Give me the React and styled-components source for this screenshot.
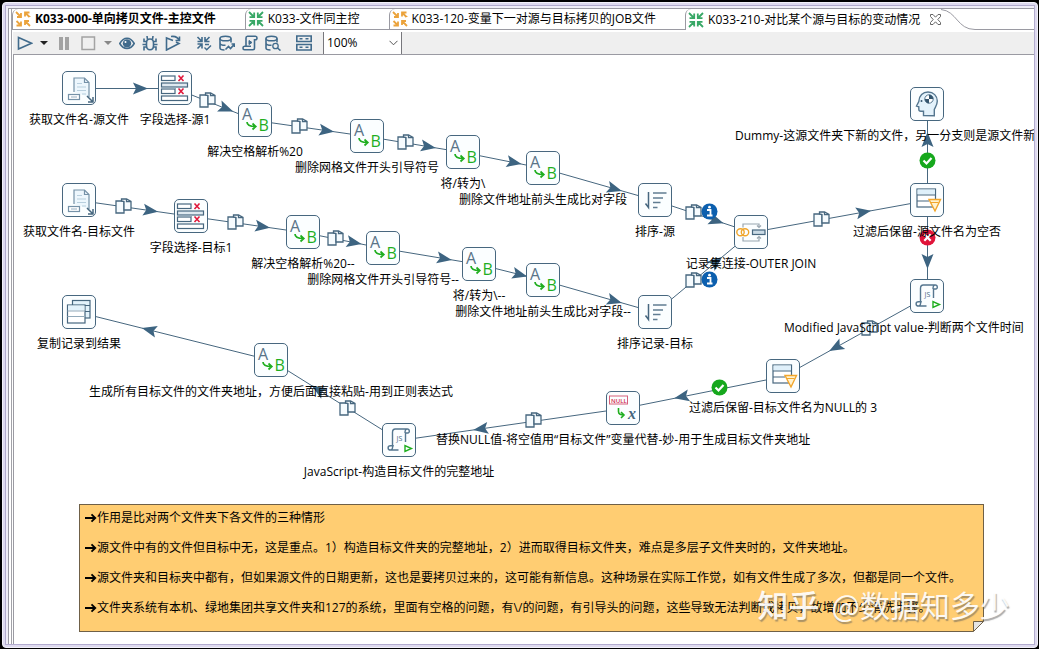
import React, { Fragment } from 'react'
import styled, { createGlobalStyle } from 'styled-components'

const SLATE = '#47677f'
const GREEN = '#1fae1f'

const GlobalStyle = createGlobalStyle`
  * {
    box-sizing: border-box;
  }

  body {
    margin: 0;
    background-color: #000;
    color: #000;
    font: 12px/16px "Open Sans", "Noto Sans CJK SC", sans-serif;
  }
`

const Desktop = styled.div`
  display: flex;
  min-height: 100vh;
  padding: 2px 1px 1px 2px;
`

const Window = styled.div`
  flex: 1;
  min-width: 0;
  display: flex;
  padding: 2px;
  border: 1px solid #f3f1fa;
  border-radius: 4px;
  background-color: #dedaef;
`

const Frame = styled.div`
  flex: 1;
  min-width: 0;
  display: flex;
  padding: 2px 0 0 2px;
  border: 1px solid #b3accf;
  background-color: #f0eef8;
`

const Editor = styled.div`
  flex: 1;
  min-width: 0;
  display: flex;
  padding-left: 2px;
  border: solid #9a9aa2;
  border-width: 1px 0 0 1px;
  background-color: #fff;
`

const Pane = styled.main`
  flex: 1;
  min-width: 0;
  display: flex;
  flex-direction: column;
  border-left: 1px solid #a2a2a8;
`

const TabStrip = styled.div`
  display: flex;
  height: 21px;
  margin-bottom: 2px;
`

const Tab = styled.button`
  display: flex;
  align-items: center;
  gap: 4px;
  flex: none;
  padding: 0 ${(props) => (props.$active ? 0 : 29)}px 0 2px;
  border: solid #9a9aa2;
  border-width: 0 0 ${(props) => (props.$active ? 0 : 1)}px 1px;
  border-top-left-radius: 6px;
  background-color: #fff;
  color: #000;
  font: inherit;
  font-weight: ${(props) => (props.$bold ? 700 : 400)};
  white-space: nowrap;
`

const TabClose = styled.svg`
  margin-left: 6px;
`

const TabCurve = styled.svg`
  flex: none;
`

const TabFill = styled.div`
  flex: 1;
  border-bottom: 1px solid #9a9aa2;
`

const Toolbar = styled.div`
  display: flex;
  align-items: center;
  gap: 8px;
  height: 22px;
  margin-left: 1px;
  padding-left: 1px;
  background-color: #efefef;
`

const ToolGroup = styled.div`
  display: flex;
`

const ToolButton = styled.button`
  display: flex;
  align-items: center;
  justify-content: center;
  width: ${(props) => props.$width || 23}px;
  height: 22px;
  padding: 0;
  border: 0;
  background: none;
`

const Zoom = styled.label`
  position: relative;
  display: block;
`

const ZoomSelect = styled.select`
  appearance: none;
  display: block;
  width: 79px;
  height: 22px;
  padding: 0 20px 0 3px;
  border: solid #77777c;
  border-width: 0 1px;
  border-radius: 0;
  background-color: #fff;
  color: #000;
  font: inherit;
`

const ZoomArrow = styled.svg`
  position: absolute;
  right: 4px;
  top: 8px;
  pointer-events: none;
`

const Canvas = styled.section`
  position: relative;
  flex: 1;
  min-height: 580px;
  margin-left: 1px;
  padding: 1px 0 0 1px;
  border: solid #9a9aa2;
  border-width: 1px 0 0 1px;
  overflow: hidden;
`

const Sheet = styled.div`
  position: relative;
  height: 100%;
`

const Hops = styled.svg`
  position: absolute;
  left: 0;
  top: 0;
  width: 100%;
  height: 580px;
`

const Node = styled.div`
  position: absolute;
  left: ${(props) => props.$x}px;
  top: ${(props) => props.$y - 17}px;
  display: flex;
  flex-direction: column;
  align-items: center;
  width: 0;
`

const NodeBox = styled.div`
  flex: none;
  width: 34px;
  height: 34px;
  border: 1px solid ${SLATE};
  border-radius: 5px;
  background-color: #fbfeff;
`

const NodeLabel = styled.div`
  flex: none;
  width: ${(props) => (props.$width ? `${props.$width}px` : 'max-content')};
  margin-top: 7px;
  white-space: nowrap;
`

const Note = styled.div`
  position: absolute;
  left: 64px;
  top: 448px;
  width: 905px;
  height: 128px;
  padding: 5px;
  border: 1px solid #6f6047;
  background-color: #ffcd72;
`

const NoteLine = styled.p`
  display: flex;
  margin: 0 0 14px;
  white-space: nowrap;
`

const NoteArrow = styled.svg`
  flex: none;
  margin-top: 2px;
`

const NoteFold = styled.svg`
  position: absolute;
  right: -1px;
  bottom: -1px;
`

const Watermark = styled.div`
  position: absolute;
  right: 24px;
  bottom: 20px;
  display: flex;
  gap: 12px;
  color: rgba(255, 255, 255, 0.92);
  font: 400 30px/40px "Noto Sans CJK SC", sans-serif;
  text-shadow: 1px 2px 1px rgba(90, 90, 90, 0.5);
  white-space: nowrap;

  b {
    font-size: 31px;
    font-weight: 500;
  }
`

/* ---- step icons, all on a 32px grid ---- */

const StepSvg = ({ children }) => (
  <svg width="32" height="32" viewBox="0 0 32 32" fill="none" stroke={SLATE} strokeWidth="1.2">
    {children}
  </svg>
)

const FilesIcon = () => (
  <StepSvg>
    <path d="M11 20V6h10.500l4.500 4.500V25" fill="#edf7fd" stroke="#7592a8" />
    <path d="M21.500 6v4.500H26" stroke="#7592a8" />
    <path d="M14 11.500h5M14 15h9M14 18.500h9M19 22h4" stroke="#b8cfde" />
    <rect x="5.500" y="22.500" width="11" height="5" fill="#fff" stroke="#7592a8" />
    <path d="M8 25h6" stroke="#a9bdcb" />
    <path d="M24 24l5.500 5.500M30 25v5h-5" strokeWidth="1.500" />
  </StepSvg>
)

const SelectIcon = () => (
  <StepSvg>
    <rect x="2.500" y="4" width="13.500" height="4.500" fill="#fff" />
    <rect x="2.500" y="17" width="13.500" height="4.500" fill="#fff" />
    <rect x="2.500" y="11" width="26" height="4" fill="#dfe9f0" />
    <path d="M3 16h14" strokeWidth="2" stroke="#8fa5b5" />
    <rect x="2.500" y="24" width="26" height="4.500" fill="#fff" />
    <path d="M19.500 3.500l5 5.500M24.500 3.500l-5 5.500M19.500 16.500l5 5.500M24.500 16.500l-5 5.500" stroke="#e0193c" strokeWidth="1.600" />
  </StepSvg>
)

const ReplaceIcon = () => (
  <StepSvg>
    <text x="3" y="16" fontSize="16" fill="#5a7488" stroke="none">A</text>
    <text x="19.500" y="27" fontSize="16" fill={GREEN} stroke="none">B</text>
    <path d="M8 18c0 3.500 3 4.500 8.500 4.500M13.500 19.500l3.300 3-3.300 3" stroke={GREEN} strokeWidth="1.700" />
  </StepSvg>
)

const SortIcon = () => (
  <StepSvg>
    <path d="M9.500 8v15.500L6.500 19.500" strokeWidth="1.500" />
    <path d="M14 9h13.500M14 14h10M14 18.500h7.500M14 23.500h4.500" stroke="#617d92" strokeWidth="1.400" />
  </StepSvg>
)

const JoinIcon = () => (
  <StepSvg>
    <path d="M8 11.500V8h16v3M8 21v4h16v-4" stroke="#98a5af" />
    <path d="M22 9.500l2 2 2-2M22 22.500l2-2 2 2" stroke="#98a5af" />
    <ellipse cx="5.500" cy="16.300" rx="3.700" ry="3.500" stroke="#f0a52a" strokeWidth="1.400" />
    <ellipse cx="10" cy="16.300" rx="3.700" ry="3.500" stroke="#f0a52a" strokeWidth="1.400" />
    <rect x="17.500" y="14" width="12.500" height="4.500" fill="#c9dae5" />
  </StepSvg>
)

const FilterIcon = () => (
  <StepSvg>
    <rect x="6" y="5" width="18.500" height="18" fill="#fff" />
    <path d="M6.500 5.500h17.500v5H6.500z" fill="#dff0fa" stroke="none" />
    <path d="M6 11h18.500M6 17h12" />
    <path d="M18 15.500h11.500L24 27z" fill="#fff2cf" stroke="#f2a62c" strokeWidth="1.400" />
    <path d="M20 18.500h7.500" stroke="#f2a62c" strokeWidth="1" />
  </StepSvg>
)

const ScriptIcon = () => (
  <StepSvg>
    <path
      d="M9.500 21.500V8.500c0-2 .8-3.500 2.800-3.500h12c2.500 0 2.700 4 .4 4h-2.200v9M24 5c-1.500 0-2 1.500-2 4M15.500 26H7.500c-3.200 0-3.200-4.200 0-4.200h3.300M7.500 26c2 0 2.200-1.800 2.200-4.200"
      stroke="#54768f"
      strokeWidth="1.400"
    />
    <text x="13.500" y="16.500" fontSize="7" fill="#47677f" stroke="none">JS</text>
    <path d="M22 21.500v6l6.500-3z" stroke={GREEN} strokeWidth="1.400" />
  </StepSvg>
)

const HeadIcon = () => (
  <StepSvg>
    <path
      d="M12.500 27.500v-4.200H9.800c-1.500 0-2-.7-2-2v-2.500L5.500 18l2.300-4.500C8 7.500 12 4 17 4c5.500 0 9.300 4 9.300 9 0 4-2.300 6.500-3 8.500v6.200z"
      fill="#e3f2fb"
      stroke="#54768f"
      strokeWidth="1.400"
    />
    <circle cx="18" cy="11" r="4.200" fill="#fff" stroke="#54768f" strokeWidth="1" />
    <path d="M18 11V6.800a4.200 4.200 0 0 1 4.200 4.200zM18 11v4.200a4.200 4.200 0 0 1-4.200-4.200z" fill="#35566e" stroke="none" />
    <circle cx="10.500" cy="13" r="1" fill="#35566e" stroke="none" />
  </StepSvg>
)

const NullIcon = () => (
  <StepSvg>
    <rect x="2.500" y="4" width="18" height="8" stroke="#d6607a" strokeWidth="1" />
    <text x="4" y="10.500" fontSize="6" fontWeight="600" fill="#d0254b" stroke="none">NULL</text>
    <path d="M11.500 16v3.500c0 2.500 1.500 3.500 5.500 3.500M14 20l3 3-3 3" stroke={GREEN} strokeWidth="1.600" />
    <text x="21" y="27" fontSize="16" fontStyle="italic" fontWeight="700" fontFamily="Liberation Serif, serif" fill="#47677f" stroke="none">x</text>
  </StepSvg>
)

const RowsIcon = () => (
  <StepSvg>
    <rect x="9.500" y="4.500" width="17.500" height="17.500" fill="#e3f2fb" />
    <path d="M9.500 9.500H27M9.500 15.500H27" />
    <rect x="4.500" y="9" width="17.500" height="18" fill="#fff" />
    <path d="M5 9.500h16.500v5H5z" fill="#e3f2fb" stroke="none" />
    <path d="M4.500 15h17.500M4.500 20.500h17.500" stroke="#93aaba" />
  </StepSvg>
)

const ICONS = {
  files: FilesIcon,
  select: SelectIcon,
  replace: ReplaceIcon,
  sort: SortIcon,
  join: JoinIcon,
  filter: FilterIcon,
  script: ScriptIcon,
  head: HeadIcon,
  nul: NullIcon,
  rows: RowsIcon,
}

/* positions are on the 16px canvas grid */
const STEPS = {
  srcFiles: { x: 64, y: 32, icon: 'files', label: '获取文件名-源文件' },
  srcSelect: { x: 160, y: 32, icon: 'select', label: '字段选择-源1' },
  srcSpace: { x: 240, y: 64, icon: 'replace', label: '解决空格解析%20' },
  srcPrefix: { x: 352, y: 80, icon: 'replace', label: '删除网格文件开头引导符号' },
  srcSlash: { x: 448, y: 96, icon: 'replace', label: '将/转为\\' },
  srcField: { x: 528, y: 112, icon: 'replace', label: '删除文件地址前头生成比对字段' },
  srcSort: { x: 640, y: 144, icon: 'sort', label: '排序-源' },
  dstFiles: { x: 64, y: 144, icon: 'files', label: '获取文件名-目标文件' },
  dstSelect: { x: 176, y: 160, icon: 'select', label: '字段选择-目标1' },
  dstSpace: { x: 288, y: 176, icon: 'replace', label: '解决空格解析%20--' },
  dstPrefix: { x: 368, y: 192, icon: 'replace', label: '删除网格文件开头引导符号--' },
  dstSlash: { x: 464, y: 208, icon: 'replace', label: '将/转为\\--' },
  dstField: { x: 528, y: 224, icon: 'replace', label: '删除文件地址前头生成比对字段--' },
  dstSort: { x: 640, y: 256, icon: 'sort', label: '排序记录-目标' },
  join: { x: 736, y: 176, icon: 'join', label: '记录集连接-OUTER JOIN' },
  filterSrc: { x: 912, y: 144, icon: 'filter', label: '过滤后保留-源文件名为空否' },
  dummy: { x: 912, y: 48, icon: 'head', label: 'Dummy-这源文件夹下新的文件，另一分支则是源文件新', labelWidth: 384 },
  compare: { x: 912, y: 240, icon: 'script', label: 'Modified JavaScript value-判断两个文件时间', labelWidth: 286 },
  filterNull: { x: 768, y: 320, icon: 'filter', label: '过滤后保留-目标文件名为NULL的 3' },
  ifNull: { x: 608, y: 352, icon: 'nul', label: '替换NULL值-将空值用“目标文件”变量代替-妙-用于生成目标文件夹地址' },
  fullPath: { x: 384, y: 384, icon: 'script', label: 'JavaScript-构造目标文件的完整地址' },
  folders: { x: 256, y: 304, icon: 'replace', label: '生成所有目标文件的文件夹地址，方便后面直接粘贴-用到正则表达式' },
  result: { x: 64, y: 256, icon: 'rows', label: '复制记录到结果' },
}

const HOPS = [
  ['srcFiles', 'srcSelect'],
  ['srcSelect', 'srcSpace', 'copy'],
  ['srcSpace', 'srcPrefix', 'copy'],
  ['srcPrefix', 'srcSlash', 'copy'],
  ['srcSlash', 'srcField'],
  ['srcField', 'srcSort'],
  ['srcSort', 'join', 'copy', 'info'],
  ['dstFiles', 'dstSelect', 'copy'],
  ['dstSelect', 'dstSpace', 'copy'],
  ['dstSpace', 'dstPrefix', 'copy'],
  ['dstPrefix', 'dstSlash'],
  ['dstSlash', 'dstField'],
  ['dstField', 'dstSort'],
  ['dstSort', 'join', 'copy', 'info'],
  ['join', 'filterSrc', 'copy'],
  ['filterSrc', 'dummy', 'yes'],
  ['filterSrc', 'compare', 'no'],
  ['compare', 'filterNull', 'copy'],
  ['filterNull', 'ifNull', 'yes'],
  ['ifNull', 'fullPath', 'copy'],
  ['fullPath', 'folders', 'copy'],
  ['folders', 'result'],
]

const Badge = ({ kind, x, y }) => (
  <g transform={`translate(${x} ${y})`}>
    {kind === 'copy' && (
      <g fill="#f6fbfe" stroke={SLATE} strokeWidth="1.300">
        <path d="M-7.500-4.500h8v12h-8z" />
        <path d="M-2-4.500v-2h5L7.500-4v8.500h-7v-8.500z" />
        <path d="M3-6.500v2.700h4.500" fill="none" />
      </g>
    )}
    {kind === 'info' && (
      <g>
        <circle r="8" fill="#0c5fae" />
        <path d="M-2.500-1.500H1v5M-2.500 4h5.500" stroke="#fff" strokeWidth="1.800" fill="none" />
        <circle cx="0" cy="-4.300" r="1.400" fill="#fff" />
      </g>
    )}
    {kind === 'yes' && (
      <g>
        <circle r="8" fill="#16a81d" />
        <path d="M-4 0l3 3 5-5.500" stroke="#fff" strokeWidth="2.200" fill="none" />
      </g>
    )}
    {kind === 'no' && (
      <g>
        <circle r="8" fill="#e0143a" />
        <path d="M-3.200-3.200l6.400 6.400M3.200-3.200l-6.400 6.400" stroke="#fff" strokeWidth="2.200" />
      </g>
    )}
  </g>
)

const Hop = ({ from, to, badge, extra }) => {
  const a = STEPS[from]
  const b = STEPS[to]
  const dx = b.x - a.x
  const dy = b.y - a.y
  const t = 0.64 + 7 / Math.hypot(dx, dy)
  const angle = (Math.atan2(dy, dx) * 180) / Math.PI
  const bx = Math.floor(a.x + dx * 0.4)
  const by = Math.floor(a.y + dy * 0.4) - 1

  return (
    <Fragment>
      <line x1={a.x} y1={a.y} x2={b.x} y2={b.y} stroke={SLATE} />
      <path
        d="M0 0L-15 6L-12 0L-15-6Z"
        fill="#3d6481"
        transform={`translate(${a.x + dx * t} ${a.y + dy * t}) rotate(${angle})`}
      />
      {badge && <Badge kind={badge} x={bx} y={by} />}
      {extra && <Badge kind={extra} x={bx + 16} y={by} />}
    </Fragment>
  )
}

const Step = ({ x, y, icon, label, labelWidth }) => {
  const Icon = ICONS[icon]
  return (
    <Node $x={x} $y={y}>
      <NodeBox>
        <Icon />
      </NodeBox>
      <NodeLabel $width={labelWidth}>{label}</NodeLabel>
    </Node>
  )
}

/* ---- tabs ---- */

const JobIcon = () => (
  <svg width="16" height="16" viewBox="0 0 16 16" fill="none" stroke="#eba33c" strokeWidth="1.800">
    <path d="M1 1l4.500 4.500M6 2v4H2M15 5.500V6M14.500 6L10 1.500M10 5.500v-4h4.500M1.500 10L6 14.500M6 10.500v4H1.500M15 15l-4.500-4.500M10 14v-4h4" />
  </svg>
)

const TransIcon = () => (
  <svg width="16" height="16" viewBox="0 0 16 16" fill="none" stroke="#38a866" strokeWidth="1.800">
    <path d="M1 1l5 5M6.200 1.500v4.700H1.500M15 1l-5 5M9.800 1.500v4.700h4.700M1 15l5-5M6.200 14.500V9.800H1.500M15 15l-5-5M9.800 14.500V9.800h4.700" />
  </svg>
)

const TABS = [
  { title: 'K033-000-单向拷贝文件-主控文件', icon: JobIcon, bold: true },
  { title: 'K033-文件同主控', icon: TransIcon },
  { title: 'K033-120-变量下一对源与目标拷贝的JOB文件', icon: JobIcon },
  { title: 'K033-210-对比某个源与目标的变动情况', icon: TransIcon, active: true },
]

/* ---- toolbar ---- */

const ToolSvg = ({ size = 16, color = '#416b8c', children }) => (
  <svg width={size} height="16" viewBox={`0 0 ${size} 16`} fill="none" stroke={color} strokeWidth="1.600">
    {children}
  </svg>
)

const Caret = ({ color }) => (
  <ToolSvg size={8}>
    <path d="M0 6h8l-4 4z" fill={color} stroke="none" />
  </ToolSvg>
)

const Database = () => (
  <Fragment>
    <ellipse cx="6.500" cy="3.500" rx="5.500" ry="2.300" />
    <path d="M1 3.500v9.500c0 1 2 2 4.500 2M12 3.500v4M1 8c0 1.500 2.500 2.300 5.500 2.300" />
  </Fragment>
)

const RUN_TOOLS = [
  { name: 'Run', width: 22, art: <ToolSvg><path d="M1.500 2.500v11.500l13-5.700z" /></ToolSvg> },
  { name: 'Run options', width: 16, art: <Caret color="#222" /> },
  { name: 'Pause', width: 24, art: <ToolSvg color="#a3a3a3"><path d="M5 2v13M11 2v13" strokeWidth="4" /></ToolSvg> },
  { name: 'Stop', width: 24, art: <ToolSvg color="#a3a3a3"><path d="M2 2h12.500v12.500H2z" strokeWidth="1.500" /></ToolSvg> },
  { name: 'Stop options', width: 15, art: <Caret color="#888" /> },
  {
    name: 'Preview',
    art: (
      <ToolSvg>
        <path d="M.8 8.500C3 4.500 5.500 3.300 8 3.300s5 1.200 7.200 5.200c-2.200 4-4.700 5-7.200 5s-5-1-7.200-5z" />
        <circle cx="8" cy="8.400" r="4.200" fill="#416b8c" stroke="none" />
        <circle cx="6.500" cy="7" r="1" fill="#fff" stroke="none" />
      </ToolSvg>
    ),
  },
  {
    name: 'Debug',
    art: (
      <ToolSvg>
        <path d="M4.500 8c0-3 1.500-4 3.500-4s3.500 1 3.500 4v2.500c0 3-1.500 4.300-3.500 4.300s-3.500-1.300-3.500-4.300z" />
        <path d="M5.500 4.500L5 1M10.500 4.500L11 1M4.500 6.500H2V3.500M11.500 6.500H14V3.500M.5 9.500h4M11.500 9.500h4M4.500 12H2v3.500M11.500 12H14v3.500" />
      </ToolSvg>
    ),
  },
  {
    name: 'Replay',
    art: (
      <ToolSvg>
        <path d="M8 5.500L1.500 3v12l12.500-6.500-3-1.500" />
        <path d="M6 1.500c4.500-.5 7 .5 8 4M10.500 5.500H14.500V1.500" />
      </ToolSvg>
    ),
  },
]

const CHECK_TOOLS = [
  {
    name: 'Verify',
    art: (
      <ToolSvg>
        <path d="M1.500 2l4 4M6 2v4.500H1.500M13.500 2l-4 4M9 2v4.500h4.500M1.500 13.500l4-4M6 13.500V9H1.500M9 9.500h4" />
        <path d="M8.500 12.500l2.200 2.200L15 10.500" strokeWidth="1.400" />
      </ToolSvg>
    ),
  },
  {
    name: 'Impact analysis',
    art: <ToolSvg><Database /><path d="M6.500 14.500l3-3 2 2 4-4.500M12.500 9H15.500v3" /></ToolSvg>,
  },
  {
    name: 'Generate SQL',
    art: (
      <ToolSvg>
        <path d="M4 11V3c0-1 .5-1.700 1.500-1.700h8c2 0 2 3.500 0 3.500h-1V13c0 1-.5 1.700-1.500 1.700H2.500c-2 0-2-3.500 0-3.500H9" />
        <path d="M7 5.500v4l3-2z" fill="#416b8c" strokeWidth="1" />
      </ToolSvg>
    ),
  },
  {
    name: 'Explore database',
    art: <ToolSvg><Database /><circle cx="10.500" cy="11" r="2.700" strokeWidth="1.300" /><path d="M12.500 13l3 2.500" /></ToolSvg>,
  },
]

const RESULT_TOOLS = [
  {
    name: 'Show results',
    art: (
      <ToolSvg>
        <path d="M.8 1h14.400v5.500H.8zM.8 9.500h14.400V15H.8zM3.500 3.800h3M9.500 3.800h3M3.500 12.300h3M9.500 12.300h3" />
      </ToolSvg>
    ),
  },
]

const NOTE = [
  '作用是比对两个文件夹下各文件的三种情形',
  '源文件中有的文件但目标中无，这是重点。1）构造目标文件夹的完整地址，2）进而取得目标文件夹，难点是多层子文件夹时的，文件夹地址。',
  '源文件夹和目标夹中都有，但如果源文件的日期更新，这也是要拷贝过来的，这可能有新信息。这种场景在实际工作觉，如有文件生成了多次，但都是同一个文件。',
  '文件夹系统有本机、绿地集团共享文件夹和127的系统，里面有空格的问题，有\\/的问题，有引导头的问题，这些导致无法判断或拷贝，故增加不少清洗步骤。',
]

const App = () => (
  <Desktop>
    <GlobalStyle />
    <Window>
      <Frame>
        <Editor>
          <Pane>
            <TabStrip>
              {TABS.map(({ title, icon: Icon, bold, active }) => (
                <Tab key={title} type="button" $bold={bold} $active={active}>
                  <Icon />
                  {title}
                  {active && (
                    <TabClose width="11" height="11" viewBox="0 0 11 11" fill="#fff" stroke="#666">
                      <path d="M.5.5h2.500l2.500 2.700L8 .5h2.500v2L7.800 5.500l2.700 3v2H8L5.500 7.800 3 10.500H.5v-2l2.700-3-2.700-3z" />
                    </TabClose>
                  )}
                </Tab>
              ))}
              <TabCurve width="34" height="21" viewBox="0 0 34 21" fill="none" stroke="#9a9aa2">
                <path d="M0 .5C16 2 16 20.500 34 20.500" />
              </TabCurve>
              <TabFill />
            </TabStrip>
            <Toolbar>
              {[RUN_TOOLS, CHECK_TOOLS, RESULT_TOOLS].map((tools) => (
                <ToolGroup key={tools[0].name}>
                  {tools.map(({ name, width, art }) => (
                    <ToolButton key={name} type="button" aria-label={name} $width={width}>
                      {art}
                    </ToolButton>
                  ))}
                </ToolGroup>
              ))}
              <Zoom>
                <ZoomSelect aria-label="Zoom" defaultValue="100%">
                  <option>100%</option>
                </ZoomSelect>
                <ZoomArrow width="9" height="6" viewBox="0 0 9 6" fill="none" stroke="#555">
                  <path d="M.5.8l4 4 4-4" />
                </ZoomArrow>
              </Zoom>
            </Toolbar>
            <Canvas>
              <Sheet>
                <Hops>
                  <g transform="translate(.5 .5)">
                    {HOPS.map(([from, to, badge, extra]) => (
                      <Hop key={from + to} from={from} to={to} badge={badge} extra={extra} />
                    ))}
                  </g>
                </Hops>
                {Object.entries(STEPS).map(([id, step]) => (
                  <Step key={id} {...step} />
                ))}
                <Note>
                  {NOTE.map((line) => (
                    <NoteLine key={line}>
                      <NoteArrow width="12" height="12" viewBox="0 0 12 12" fill="none" stroke="#000" strokeWidth="1.800">
                        <path d="M0 6h10M6.500 2.300L10.300 6 6.500 9.700" />
                      </NoteArrow>
                      {line}
                    </NoteLine>
                  ))}
                  <NoteFold width="11" height="11" viewBox="0 0 11 11">
                    <path d="M0 11L11 0v11z" fill="#fff" />
                    <path d="M.5 10.500V.5h10z" fill="#e4e4e4" stroke="#6f6047" />
                  </NoteFold>
                </Note>
              </Sheet>
              <Watermark>
                <b>知乎</b>
                <span>@数据知多少</span>
              </Watermark>
            </Canvas>
          </Pane>
        </Editor>
      </Frame>
    </Window>
  </Desktop>
)

export default App
